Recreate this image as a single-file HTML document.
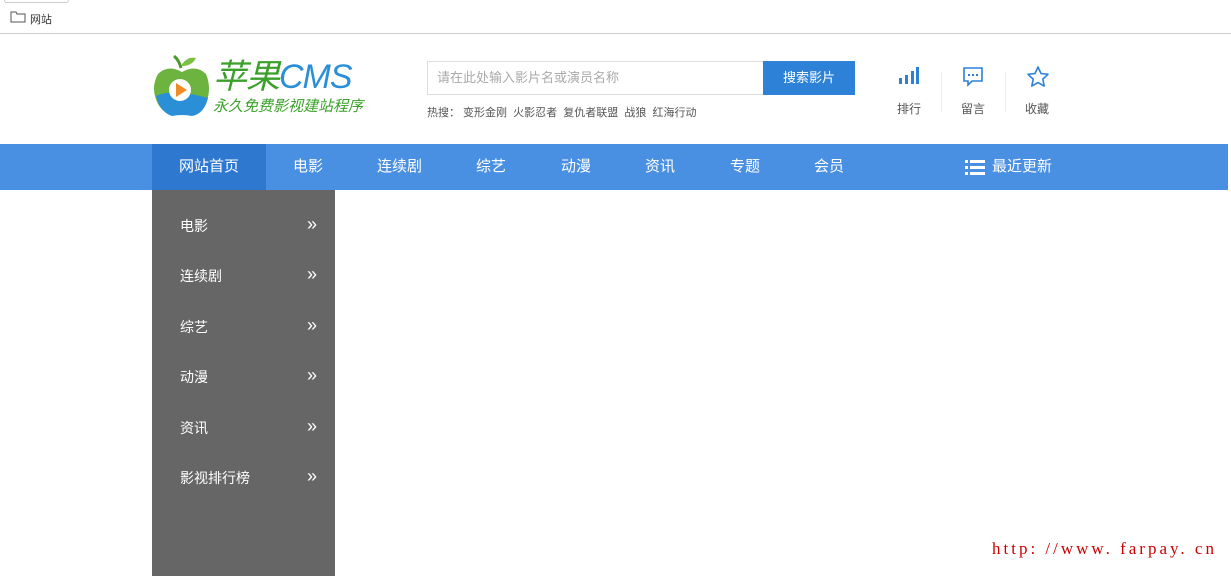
<!DOCTYPE html>
<html><head><meta charset="utf-8"><style>
*{margin:0;padding:0;box-sizing:border-box}
body{width:1231px;height:576px;overflow:hidden;background:#fff;font-family:"Liberation Sans","Noto Sans CJK SC",sans-serif;position:relative}
.a{position:absolute}
.nav span{position:absolute;top:0;line-height:46px;color:#fff;font-size:15px}
.side div{position:absolute;left:28px;color:#fff;font-size:14px;width:140px}
.side div b{position:absolute;right:3px;top:-2px;font-weight:normal;font-size:18px}
.hot{font-size:11px;color:#555}
.ic{position:absolute;top:100px;font-size:12px;color:#555;width:40px;text-align:center}
</style></head><body>
<div class="a" style="left:4px;top:0;width:65px;height:3px;border:1px solid #ccc;border-top:none;border-radius:0 0 4px 4px"></div>
<svg class="a" style="left:10px;top:11px" width="16" height="12"><path d="M1 1h5l1 2h8v8H1z" fill="none" stroke="#555"/></svg>
<div class="a" style="left:30px;top:11px;font-size:11px;color:#333">网站</div>
<div class="a" style="left:0;top:33px;width:1231px;height:1px;background:#ccc"></div>
<svg class="a" style="left:152px;top:54px" width="60" height="66">
<path d="M29 14 Q27 6 22 2" stroke="#4a9a2a" stroke-width="3" fill="none"/>
<path d="M30 10 Q36 2 44 4 Q40 12 30 12z" fill="#7bc043"/>
<path d="M30 18 Q16 10 6 20 Q-2 34 6 50 Q14 64 30 60 Q46 64 54 50 Q60 34 54 20 Q44 10 30 18z" fill="#6cb33f"/>
<path d="M4 42 Q20 34 56 44 Q52 60 40 62 Q30 60 20 62 Q8 58 4 42z" fill="#2b8fd8"/>
<circle cx="28" cy="36" r="11" fill="#fff"/>
<path d="M24 29 L35 36 L24 43z" fill="#f08a24"/>
</svg>
<div class="a" style="left:213px;top:60px;font-size:34px;line-height:34px;color:#3aa02a;font-style:italic;letter-spacing:-1px">苹果<span style="color:#2b8fd8">CMS</span></div>
<div class="a" style="left:213px;top:98px;font-size:15px;color:#3aa02a;font-style:italic;line-height:18px">永久免费影视建站程序</div>
<div class="a" style="left:427px;top:61px;width:337px;height:34px;border:1px solid #ddd;border-right:none;font-size:13px;color:#aaa;line-height:32px;padding-left:9px">请在此处输入影片名或演员名称</div>
<div class="a" style="left:763px;top:61px;width:92px;height:34px;background:#2d82d7;color:#fff;font-size:13px;line-height:34px;text-align:center">搜索影片</div>
<div class="a hot" style="left:427px;top:104px">热搜： 变形金刚&nbsp; 火影忍者&nbsp; 复仇者联盟&nbsp; 战狼&nbsp; 红海行动</div>
<svg class="a" style="left:898px;top:67px" width="22" height="18"><g fill="#2d82d7"><rect x="1" y="11" width="3" height="6"/><rect x="7" y="8" width="3" height="9"/><rect x="13" y="4" width="3" height="13"/><rect x="18" y="0" width="3" height="17"/></g></svg>
<svg class="a" style="left:962px;top:66px" width="22" height="22"><path d="M2 2h18v13H10l-4 4v-4H2z" fill="none" stroke="#2d82d7" stroke-width="1.6"/><g fill="#2d82d7"><rect x="6" y="8" width="2" height="2"/><rect x="10" y="8" width="2" height="2"/><rect x="14" y="8" width="2" height="2"/></g></svg>
<svg class="a" style="left:1026px;top:65px" width="24" height="24"><path d="M12 2l3 6.5 7 .8-5.2 4.8 1.4 7L12 17.6 5.8 21.1l1.4-7L2 9.3l7-.8z" fill="none" stroke="#2d82d7" stroke-width="1.6" stroke-linejoin="round"/></svg>
<div class="ic" style="left:889px">排行</div>
<div class="ic" style="left:953px">留言</div>
<div class="ic" style="left:1017px">收藏</div>
<div class="a" style="left:941px;top:72px;width:1px;height:40px;background:#eee"></div>
<div class="a" style="left:1005px;top:72px;width:1px;height:40px;background:#eee"></div>
<div class="a nav" style="left:0;top:144px;width:1228px;height:46px;background:#4a90e2">
<div class="a" style="left:152px;top:0;width:114px;height:46px;background:#2f78cf"></div>
<span style="left:179px">网站首页</span><span style="left:293px">电影</span><span style="left:377px">连续剧</span><span style="left:476px">综艺</span><span style="left:561px">动漫</span><span style="left:645px">资讯</span><span style="left:730px">专题</span><span style="left:814px">会员</span>
<svg class="a" style="left:965px;top:16px" width="20" height="15"><g fill="#fff"><rect x="0" y="0" width="3" height="3"/><rect x="5" y="0" width="15" height="3"/><rect x="0" y="6" width="3" height="3"/><rect x="5" y="6" width="15" height="3"/><rect x="0" y="12" width="3" height="3"/><rect x="5" y="12" width="15" height="3"/></g></svg>
<span style="left:992px">最近更新</span>
</div>
<div class="a side" style="left:152px;top:190px;width:183px;height:386px;background:#666">
<div style="top:26px">电影<b>»</b></div>
<div style="top:76px">连续剧<b>»</b></div>
<div style="top:127px">综艺<b>»</b></div>
<div style="top:177px">动漫<b>»</b></div>
<div style="top:228px">资讯<b>»</b></div>
<div style="top:278px">影视排行榜<b>»</b></div>
</div>
<div class="a" style="left:992px;top:539px;font-family:'Liberation Serif',serif;font-size:17px;letter-spacing:3px;color:#c00">http: //www. farpay. cn</div>
</body></html>
